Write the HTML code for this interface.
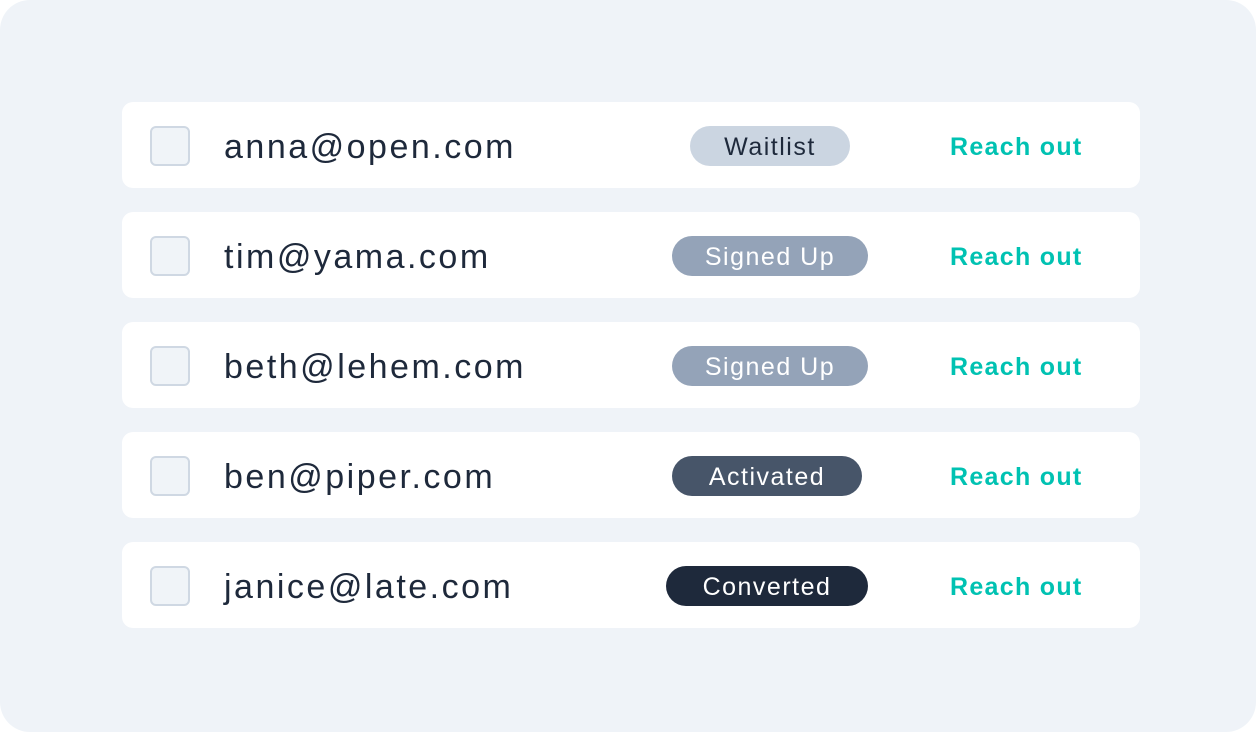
<!DOCTYPE html>
<html><head><style>
html,body{margin:0;padding:0;background:#fff;}
.wrap{position:absolute;left:0;top:0;width:1256px;height:732px;background:#eff3f8;border-radius:30px;font-family:"Liberation Sans",sans-serif;}
.row{position:absolute;left:122px;width:1018px;height:86px;background:#fff;border-radius:11px;}
.cb{position:absolute;left:28px;top:24px;width:36px;height:36px;border:2px solid #cfd8e3;background:#f0f4f8;border-radius:6px;}
.em{position:absolute;left:102px;top:2px;line-height:86px;font-size:34px;color:#1e293b;letter-spacing:2.5px;}
.bd{position:absolute;top:24px;height:40px;line-height:42px;border-radius:20px;text-align:center;font-size:25px;letter-spacing:1.5px;}
.ro{position:absolute;left:828px;top:1px;line-height:88px;font-size:25px;font-weight:bold;color:#00c2b2;letter-spacing:1.3px;}
</style></head><body><div class="wrap">
<div class="row" style="top:102px"><div class="cb"></div><div class="em">anna@open.com</div><div class="bd" style="left:568px;width:160px;background:#cbd5e1;color:#1e293b">Waitlist</div><div class="ro">Reach out</div></div>
<div class="row" style="top:212px"><div class="cb"></div><div class="em">tim@yama.com</div><div class="bd" style="left:550px;width:196px;background:#94a3b8;color:#fff">Signed Up</div><div class="ro">Reach out</div></div>
<div class="row" style="top:322px"><div class="cb"></div><div class="em">beth@lehem.com</div><div class="bd" style="left:550px;width:196px;background:#94a3b8;color:#fff">Signed Up</div><div class="ro">Reach out</div></div>
<div class="row" style="top:432px"><div class="cb"></div><div class="em">ben@piper.com</div><div class="bd" style="left:550px;width:190px;background:#475569;color:#fff">Activated</div><div class="ro">Reach out</div></div>
<div class="row" style="top:542px"><div class="cb"></div><div class="em">janice@late.com</div><div class="bd" style="left:544px;width:202px;background:#1e293b;color:#fff">Converted</div><div class="ro">Reach out</div></div>
</div></body></html>
